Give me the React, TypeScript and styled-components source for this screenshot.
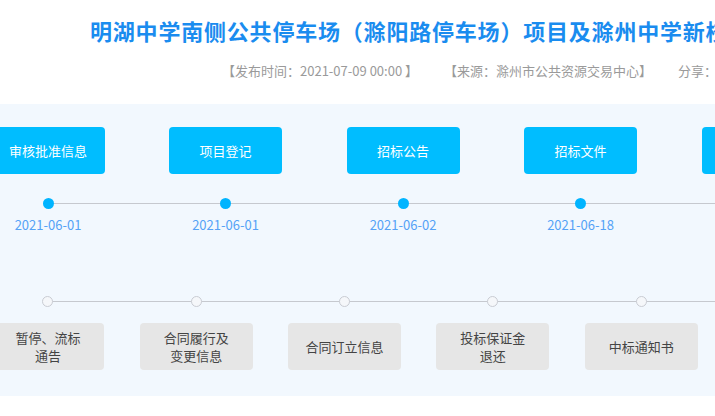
import React from "react";
import styled, { createGlobalStyle } from "styled-components";

const GlobalStyle = createGlobalStyle`
  html, body {
    margin: 0;
    padding: 0;
    background: #ffffff;
    overflow: hidden;
  }
  body {
    font-family: "Noto Sans CJK SC", "Noto Sans", sans-serif;
  }
`;

type TopStep = { label: string; date: string };
type BottomStep = { lines: string[] };

const topSteps: TopStep[] = [
  { label: "审核批准信息", date: "2021-06-01" },
  { label: "项目登记", date: "2021-06-01" },
  { label: "招标公告", date: "2021-06-02" },
  { label: "招标文件", date: "2021-06-18" },
  { label: "开标记录", date: "2021-07-09" },
];

const bottomSteps: BottomStep[] = [
  { lines: ["暂停、流标", "通告"] },
  { lines: ["合同履行及", "变更信息"] },
  { lines: ["合同订立信息"] },
  { lines: ["投标保证金", "退还"] },
  { lines: ["中标通知书"] },
  { lines: ["中标结果公示"] },
];

function App() {
  return (
    <Page>
      <GlobalStyle />
      <Header>
        <Title>明湖中学南侧公共停车场（滁阳路停车场）项目及滁州中学新校区建设项目</Title>
        <Meta>
          <MetaItem>【发布时间：2021-07-09 00:00 】</MetaItem>
          <MetaItem>【来源：滁州市公共资源交易中心】</MetaItem>
          <MetaItem>分享：</MetaItem>
        </Meta>
      </Header>

      <Panel>
        <TopRow>
          {topSteps.map((s, i) => (
            <TopSlot key={i}>
              <StageBox>{s.label}</StageBox>
              <Track>
                <Dot $filled />
              </Track>
              <DateText>{s.date}</DateText>
            </TopSlot>
          ))}
        </TopRow>

        <BottomRow>
          {bottomSteps.map((s, i) => (
            <BottomSlot key={i}>
              <Track>
                <Dot />
              </Track>
              <PendingBox>
                {s.lines.map((l, j) => (
                  <span key={j}>{l}</span>
                ))}
              </PendingBox>
            </BottomSlot>
          ))}
        </BottomRow>
      </Panel>
    </Page>
  );
}

const Page = styled.div`
  width: 715px;
  overflow: hidden;
`;

const Header = styled.div`
  padding: 15px 0 0 90px;
  height: 104px;
  box-sizing: border-box;
`;

const Title = styled.h1`
  margin: 0;
  font-size: 22px;
  line-height: 30px;
  font-weight: 700;
  letter-spacing: 0.8px;
  color: #1a8cef;
  white-space: nowrap;
`;

const Meta = styled.div`
  display: flex;
  gap: 26px;
  margin: 16px 0 0 132px;
  font-size: 13px;
  line-height: 20px;
  color: #9a9a9a;
  white-space: nowrap;
`;

const MetaItem = styled.span``;

const Panel = styled.div`
  background: #f2f8fe;
  height: 292px;
  padding-top: 23px;
  box-sizing: border-box;
  overflow: hidden;
`;

const TopRow = styled.div`
  display: flex;
  margin-left: -40.75px;
`;

const BottomRow = styled.div`
  display: flex;
  margin-left: -26.2px;
  margin-top: 61px;
`;

const TopSlot = styled.div`
  flex: 0 0 177.5px;
  display: flex;
  flex-direction: column;
  align-items: center;
`;

const BottomSlot = styled.div`
  flex: 0 0 148.3px;
  display: flex;
  flex-direction: column;
  align-items: center;
`;

const StageBox = styled.div`
  width: 113px;
  height: 47px;
  border-radius: 4px;
  background: #00bdff;
  color: #ffffff;
  font-size: 13px;
  display: flex;
  align-items: center;
  justify-content: center;
  margin-bottom: 24px;
`;

const Track = styled.div`
  position: relative;
  width: 100%;
  height: 11px;
  display: flex;
  justify-content: center;

  &::after {
    content: "";
    position: absolute;
    left: 50%;
    width: 100%;
    top: 5px;
    height: 1px;
    background: #c6c9cf;
  }
`;

const Dot = styled.div<{ $filled?: boolean }>`
  position: relative;
  z-index: 1;
  width: 11px;
  height: 11px;
  box-sizing: border-box;
  border-radius: 50%;
  background: ${(p) => (p.$filled ? "#00b4ff" : "#f5f7fa")};
  border: ${(p) => (p.$filled ? "none" : "1px solid #c9ccd3")};
`;

const DateText = styled.div`
  margin-top: 6px;
  font-size: 13px;
  line-height: 20px;
  color: #55a2f6;
`;

const PendingBox = styled.div`
  margin-top: 16px;
  width: 113px;
  height: 47px;
  border-radius: 4px;
  background: #e6e6e6;
  color: #444;
  font-size: 13px;
  line-height: 18px;
  display: flex;
  flex-direction: column;
  align-items: center;
  justify-content: center;
  text-align: center;
`;

export default App;
